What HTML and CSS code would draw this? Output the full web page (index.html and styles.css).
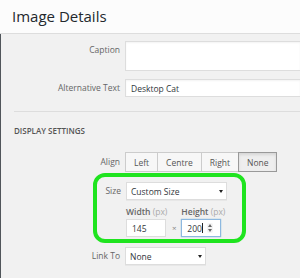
FILE: index.html
```html
<!DOCTYPE html>
<html lang="en">
<head>
    <meta charset="UTF-8">
    <meta name="viewport" content="width=device-width, initial-scale=1.0">
    <title>Image Details</title>
    <link rel="stylesheet" href="styles.css">
</head>
<body>
    <header id="modal-header">
        <h1>Image Details</h1>
    </header>
    <main id="details">
        <div class="row row-caption">
            <label class="row-label" for="caption">Caption</label>
            <textarea id="caption" class="wide"></textarea>
        </div>
        <div class="row">
            <label class="row-label" for="alt">Alternative Text</label>
            <input type="text" id="alt" class="wide" value="Desktop Cat">
        </div>
        <hr>
        <h2>Display Settings</h2>
        <div class="row">
            <span class="row-label">Align</span>
            <div class="button-group">
                <button>Left</button>
                <button>Centre</button>
                <button>Right</button>
                <button class="active">None</button>
            </div>
        </div>
        <div id="highlight">
            <div class="row">
                <label class="row-label" for="size">Size</label>
                <div class="select select-size">
                    <select id="size"><option>Custom Size</option></select>
                </div>
            </div>
            <div class="dimensions">
                <div class="dim">
                    <span class="dim-label">Width <span class="unit">(px)</span></span>
                    <input type="text" class="field" value="145">
                </div>
                <span class="times">&times;</span>
                <div class="dim">
                    <span class="dim-label">Height <span class="unit">(px)</span></span>
                    <div class="field focus">200<span class="caret"></span><span class="spin"><span class="up"></span><span class="down"></span></span></div>
                </div>
            </div>
        </div>
        <div class="row row-link">
            <label class="row-label" for="link">Link To</label>
            <div class="select select-link">
                <select id="link"><option>None</option></select>
            </div>
        </div>
    </main>
</body>
</html>
```

FILE: styles.css
```css
html, body {
    margin: 0;
    height: 100%;
    font-family: 'Open Sans', 'Liberation Sans', sans-serif;
    color: #444;
    background-color: #f1f1f1;
    overflow: hidden;
}
body {
    display: flex;
    flex-direction: column;
}
#modal-header {
    flex: none;
    height: 33px;
    background-color: #fcfcfc;
    border-bottom: 1px solid #dddddd;
    padding-left: 12px;
}
#modal-header h1 {
    margin: 0;
    font-size: 15px;
    line-height: 33px;
    font-weight: 400;
    color: #23282d;
}
#details {
    flex: 1;
    min-height: 0;
    border-left: 1px solid #50555a;
    padding-top: 7px;
    font-size: 8.5px;
}
.row {
    display: flex;
    align-items: center;
    gap: 5px;
    margin-bottom: 8px;
}
.row-caption {
    align-items: flex-start;
}
.row-caption .row-label {
    padding-top: 3px;
}
.row-label {
    flex: none;
    width: 119px;
    text-align: right;
    line-height: 12px;
    color: #666;
}
textarea, input, select, button {
    font-family: 'Open Sans', 'Liberation Sans', sans-serif;
    font-size: 8.5px;
    color: #32373c;
    box-sizing: border-box;
    margin: 0;
}
.wide {
    flex: 1;
    min-width: 0;
    background: #fff;
    border: 1px solid #dddddd;
    border-right: none;
    box-shadow: inset 0 1px 2px rgba(0,0,0,0.05);
    outline: none;
}
textarea.wide {
    height: 30px;
    resize: none;
}
input.wide {
    height: 18px;
    padding: 0 5px;
}
hr {
    margin: 14px 0 0 13px;
    border: none;
    border-top: 1px solid #dddddd;
}
h2 {
    margin: 13px 0 15px 13px;
    font-size: 8px;
    line-height: 12px;
    font-weight: 600;
    text-transform: uppercase;
    color: #555;
}
.button-group {
    display: flex;
}
.button-group button {
    height: 20px;
    padding: 0 8px;
    background: #f7f7f7;
    border: 1px solid #cccccc;
    margin-left: -1px;
    color: #555;
}
.button-group button:first-child {
    margin-left: 0;
}
.button-group button.active {
    background: #eeeeee;
    border-color: #999999;
    box-shadow: inset 0 2px 3px rgba(0,0,0,0.1);
    position: relative;
}
#highlight {
    width: 145px;
    margin: -7px 0 4px 92px;
    padding: 5px 0 2px;
    border: 4px solid #1fe41f;
    border-radius: 12px;
}
#highlight .row-label {
    width: 24px;
}
#highlight .row {
    margin-bottom: 6px;
}
.select {
    position: relative;
    flex: none;
}
.select select {
    appearance: none;
    -webkit-appearance: none;
    width: 100%;
    height: 18px;
    padding: 0 4px;
    background: #fff;
    border: 1px solid #dddddd;
    border-radius: 0;
    box-shadow: 0 1px 0 rgba(0,0,0,0.04);
}
.select::after {
    content: "";
    position: absolute;
    top: 8px;
    right: 4px;
    border-left: 2px solid transparent;
    border-right: 2px solid transparent;
    border-top: 3px solid #222;
}
.select-size {
    width: 101px;
}
.select-link {
    width: 81px;
}
.dimensions {
    display: flex;
    align-items: flex-end;
    padding-left: 29px;
}
.dim {
    display: flex;
    flex-direction: column;
    gap: 1px;
}
.dim-label {
    line-height: 12px;
    color: #666;
    font-weight: 600;
}
.unit {
    color: #aaa;
    font-weight: 400;
}
.field {
    display: flex;
    align-items: center;
    width: 40px;
    height: 18px;
    padding: 0 5px;
    background: #fff;
    border: 1px solid #dddddd;
    box-sizing: border-box;
    outline: none;
    color: #32373c;
    position: relative;
}
.field.focus {
    border-color: #8db8e0;
    box-shadow: 0 0 1px rgba(30,140,190,0.6);
}
.caret {
    width: 1px;
    height: 10px;
    background: #222;
}
.spin {
    position: absolute;
    right: 7px;
    top: 3px;
    display: flex;
    flex-direction: column;
    gap: 2px;
    padding: 1px;
    border-radius: 2px;
    background: #f4f4f4;
}
.spin .up {
    border-left: 2px solid transparent;
    border-right: 2px solid transparent;
    border-bottom: 3px solid #666;
}
.spin .down {
    border-left: 2px solid transparent;
    border-right: 2px solid transparent;
    border-top: 3px solid #666;
}
.times {
    width: 14px;
    height: 18px;
    line-height: 18px;
    text-align: center;
    color: #888;
    font-size: 8px;
}
.row-link {
    margin-bottom: 0;
}
```
